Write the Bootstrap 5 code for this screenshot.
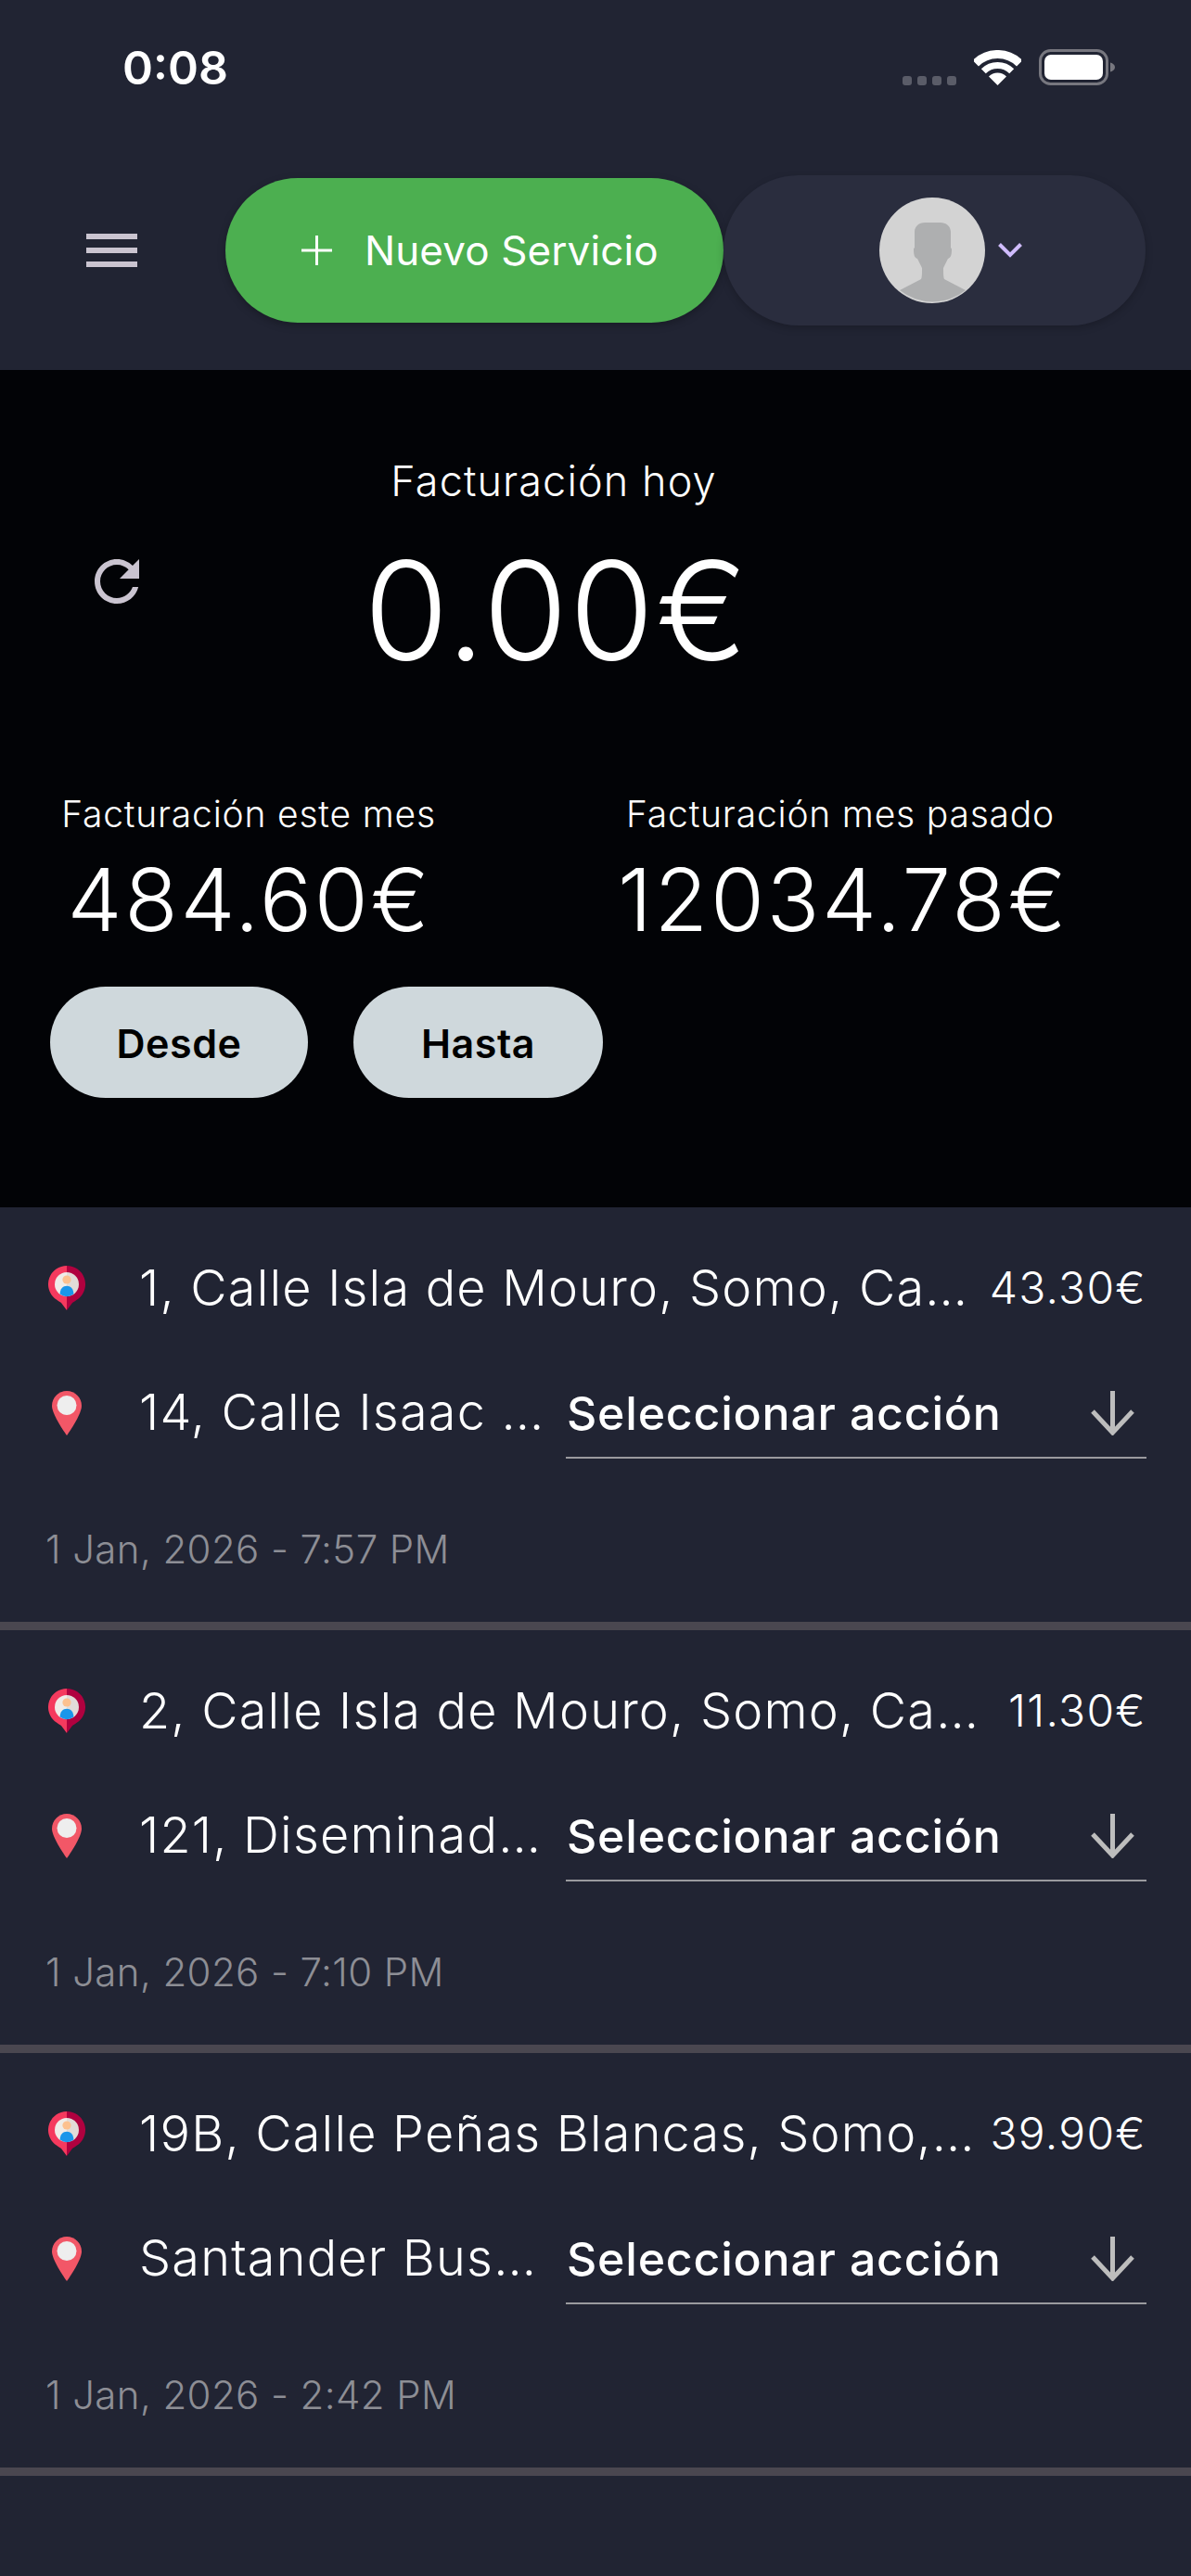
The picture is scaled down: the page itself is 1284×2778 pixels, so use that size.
<!DOCTYPE html>
<html lang="es">
<head>
  <meta charset="UTF-8" />
  <meta name="viewport" content="width=device-width, initial-scale=1.0" />
  <title>Servicios</title>
  <link href="https://cdn.jsdelivr.net/npm/bootstrap@5.3.0/dist/css/bootstrap.min.css" rel="stylesheet">
  <style>
    body {
      background: #212433;
      color: #fff;
      font-family: Inter, "Liberation Sans", sans-serif;
      font-weight: 300;
      width: 1284px;
      min-height: 2778px;
    }
    .status-bar { height: 140px; padding: 53px 82px 0 132px; }
    .status-time { font-size: 50px; font-weight: 600; line-height: 41px; letter-spacing: 0; }
    .signal-dot { width: 10px; height: 10px; border-radius: 3px; background: #5a5c68; }
    .signal-dots { gap: 6px; margin-right: 19px; }
    .wifi-icon { margin-right: 19px; }
    .top-nav { height: 259px; padding-left: 93px; }
    .menu-icon { width: 55px; height: 36px; margin-right: 95px; }
    .new-btn {
      width: 537px; height: 156px; padding: 0 0 0 82px;
      background: #4caf50; border: 0; border-radius: 78px;
      color: #fff; font-size: 44px; font-weight: 400; gap: 35px; letter-spacing: .1px;
      box-shadow: 0 3px 8px rgba(0, 0, 0, .25);
    }
    .new-btn:hover { background: #4caf50; color: #fff; }
    .profile-pill {
      width: 455px; height: 162px; padding-left: 168px;
      background: #2a2d3e; border-radius: 81px; gap: 14px;
      box-shadow: 0 3px 8px rgba(0, 0, 0, .2);
    }
    .hero { background: #020306; height: 903px; padding-top: 95px; }
    .refresh-icon { margin: 11px 0 0 90px; }
    .today-col { width: 870px; }
    .today-label { font-size: 45px; line-height: 50px; letter-spacing: 1.1px; }
    .today-value { font-size: 148px; line-height: 180px; margin-top: 25px; letter-spacing: 1.5px; font-weight: 350; padding-left: 6px; }
    .stats-row { margin-top: 104px; padding-left: 53px; }
    .stat-col { width: 430px; }
    .stat-col + .stat-col { width: 484px; margin-left: 181px; }
    .stat-label { font-size: 39px; line-height: 50px; letter-spacing: .8px; }
    .stat-value { font-size: 94px; line-height: 90px; margin-top: 22px; letter-spacing: 2.6px; font-weight: 350; padding-left: 2px; }
    .range-row { margin-top: 49px; padding-left: 54px; gap: 49px; }
    .range-btn {
      height: 120px; padding: 2px 0 0; background: #cfd8dc; border: 0; border-radius: 60px;
      color: #000; font-size: 43px; font-weight: 600; letter-spacing: .5px;
    }
    .range-btn:hover { background: #cfd8dc; color: #000; }
    .range-from { width: 278px; }
    .range-to { width: 269px; }
    .job-item { padding: 52px 48px 0 52px; height: 447px; }
    .job-rule { height: 9px; background: #4a4750; }
    .pin-col { width: 40px; margin-right: 59px; flex-shrink: 0; }
    .origin-row { height: 70px; }
    .dest-row { margin-top: 64px; height: 86px; }
    .dest-row .pin-col { padding-top: 12px; }
    .job-addr { font-size: 54px; line-height: 70px; letter-spacing: 1.2px; white-space: nowrap; margin-left: -1px; }
    .dest-addr { width: 460px; }
    .job-price { font-size: 48px; margin-left: auto; letter-spacing: 1.3px; }
    .action-select {
      width: 626px; height: 85px; padding: 0 13px 0 1px;
      border-bottom: 2px solid #9a9a9f; font-size: 50px; font-weight: 500; line-height: 72px; letter-spacing: .8px;
    }
    .action-arrow { margin-top: 12px; }
    .job-date { margin-top: 72px; font-size: 42px; line-height: 50px; color: #8d8e95; margin-left: -3px; letter-spacing: .4px; }
  </style>
</head>
<body>
  <div class="status-bar d-flex justify-content-between align-items-start">
    <div class="status-time">0:08</div>
    <div class="d-flex align-items-end">
      <div class="signal-dots d-flex mb-0 pb-0">
        <div class="signal-dot"></div><div class="signal-dot"></div><div class="signal-dot"></div><div class="signal-dot"></div>
      </div>
      <svg class="wifi-icon" width="51" height="38" viewBox="0 0 51 38" fill="none">
        <path d="M1.8 14.3A33.5 33.5 0 0 1 49.2 14.3" stroke="#fff" stroke-width="9"/>
        <path d="M10.3 22.8A21.5 21.5 0 0 1 40.7 22.8" stroke="#fff" stroke-width="7"/>
        <path d="M25.5 38L16 28.5A13.4 13.4 0 0 1 35 28.5Z" fill="#fff"/>
      </svg>
      <svg width="82" height="39" viewBox="0 0 82 39" fill="none">
        <rect x="1.5" y="1.5" width="72" height="36" rx="11" stroke="#77777f" stroke-width="3"/>
        <rect x="6" y="6" width="63" height="27" rx="7" fill="#fff"/>
        <path d="M77 14.5C80 15.5 82 17 82 19.5S80 23.5 77 24.5Z" fill="#77777f"/>
      </svg>
    </div>
  </div>

  <div class="top-nav d-flex align-items-center">
    <svg class="menu-icon" viewBox="0 0 55 36" fill="#cac4d0">
      <rect width="55" height="6"/><rect y="15" width="55" height="6"/><rect y="30" width="55" height="6"/>
    </svg>
    <button class="btn new-btn d-flex align-items-center" type="button">
      <svg width="33" height="32" viewBox="0 0 33 32" fill="#fff"><rect x="15" width="3" height="32"/><rect y="14.5" width="33" height="3"/></svg>
      <span>Nuevo Servicio</span>
    </button>
    <div class="profile-pill d-flex align-items-center">
      <svg width="114" height="114" viewBox="0 0 114 114">
        <circle cx="57" cy="57" r="57" fill="#d3d3d3"/>
        <path d="M22 100L45 88C46 86 46 82 46 76C44 72 42 68 41 66C38 65 37 62 37 56C37 54 38 55 38 54V37C38 31 43 27 49 27H66C72 27 77 31 77 37V54C77 55 78 54 78 56C78 62 77 65 74 66C73 68 71 72 69 76C69 82 69 86 70 88L93 100A57 57 0 0 1 22 100Z" fill="#aeafb0"/>
      </svg>
      <svg width="26" height="16" viewBox="0 0 26 16" fill="none"><path d="M1.5 1.5L13 13L24.5 1.5" stroke="#d0bcff" stroke-width="4"/></svg>
    </div>
  </div>

  <div class="hero">
    <div class="d-flex align-items-center">
      <svg class="refresh-icon" width="72" height="72" viewBox="0 0 24 24" fill="#cac4d0">
        <path d="M17.65 6.35C16.2 4.9 14.21 4 12 4c-4.42 0-7.99 3.58-7.99 8s3.57 8 7.99 8c3.73 0 6.84-2.55 7.73-6h-2.08c-.82 2.33-3.04 4-5.65 4-3.31 0-6-2.69-6-6s2.69-6 6-6c1.66 0 3.14.69 4.22 1.78L13 11h7V4l-2.35 2.35z"/>
      </svg>
      <div class="today-col text-center">
        <div class="today-label">Facturación hoy</div>
        <div class="today-value">0.00€</div>
      </div>
    </div>
    <div class="stats-row d-flex">
      <div class="stat-col text-center">
        <div class="stat-label">Facturación este mes</div>
        <div class="stat-value">484.60€</div>
      </div>
      <div class="stat-col text-center">
        <div class="stat-label">Facturación mes pasado</div>
        <div class="stat-value">12034.78€</div>
      </div>
    </div>
    <div class="range-row d-flex">
      <button class="btn range-btn range-from" type="button">Desde</button>
      <button class="btn range-btn range-to" type="button">Hasta</button>
    </div>
  </div>

  <div id="jobs"></div>

  <script>
    const jobs = [
      { from: '1, Calle Isla de Mouro, Somo, Ca…', to: '14, Calle Isaac …', price: '43.30€', date: '1 Jan, 2026 - 7:57 PM' },
      { from: '2, Calle Isla de Mouro, Somo, Ca…', to: '121, Diseminad…', price: '11.30€', date: '1 Jan, 2026 - 7:10 PM' },
      { from: '19B, Calle Peñas Blancas, Somo,…', to: 'Santander Bus…', price: '39.90€', date: '1 Jan, 2026 - 2:42 PM' }
    ];

    const originPin = `
      <svg width="40" height="48" viewBox="0 0 40 48">
        <path d="M20 0A20 20 0 0 0 7 35.2C10 37.5 13 39 14 40L20 48Z" fill="#f53a5e"/>
        <path d="M20 0A20 20 0 0 1 33 35.2C30 37.5 27 39 26 40L20 48Z" fill="#b0013f"/>
        <path d="M20 7A13 13 0 0 0 20 33Z" fill="#f0ece8"/>
        <path d="M20 7A13 13 0 0 1 20 33Z" fill="#e2dcd8"/>
        <circle cx="20" cy="15" r="4.6" fill="#fcc18f"/>
        <path d="M12.6 30.6C12.6 25 16 21.7 20 21.7S27.4 25 27.4 30.6A13 13 0 0 1 12.6 30.6Z" fill="#1a96ea"/>
      </svg>`;
    const destPin = `
      <svg width="32" height="48" viewBox="0 0 32 48">
        <path d="M16 0C7.2 0 0 7.2 0 16C0 26 16 48 16 48S32 26 32 16C32 7.2 24.8 0 16 0Z" fill="#f25767"/>
        <circle cx="16" cy="15.5" r="10.5" fill="#eee"/>
      </svg>`;
    const arrow = `
      <svg class="action-arrow" width="47" height="48" viewBox="0 0 47 48" fill="none" stroke="#bdbdbd" stroke-width="5">
        <path d="M23.5 0V45M2 22L23.5 45L45 22"/>
      </svg>`;

    document.getElementById('jobs').innerHTML = jobs.map(job => `
      <div class="job-item">
        <div class="origin-row d-flex align-items-center">
          <div class="pin-col d-flex justify-content-center">${originPin}</div>
          <div class="job-addr">${job.from}</div>
          <div class="job-price">${job.price}</div>
        </div>
        <div class="dest-row d-flex align-items-start">
          <div class="pin-col d-flex justify-content-center">${destPin}</div>
          <div class="job-addr dest-addr">${job.to}</div>
          <div class="action-select d-flex justify-content-between align-items-start">
            <span>Seleccionar acción</span>${arrow}
          </div>
        </div>
        <div class="job-date">${job.date}</div>
      </div>
      <div class="job-rule"></div>`).join('');
  </script>
  <script src="https://cdn.jsdelivr.net/npm/bootstrap@5.3.0/dist/js/bootstrap.bundle.min.js"></script>
</body>
</html>
